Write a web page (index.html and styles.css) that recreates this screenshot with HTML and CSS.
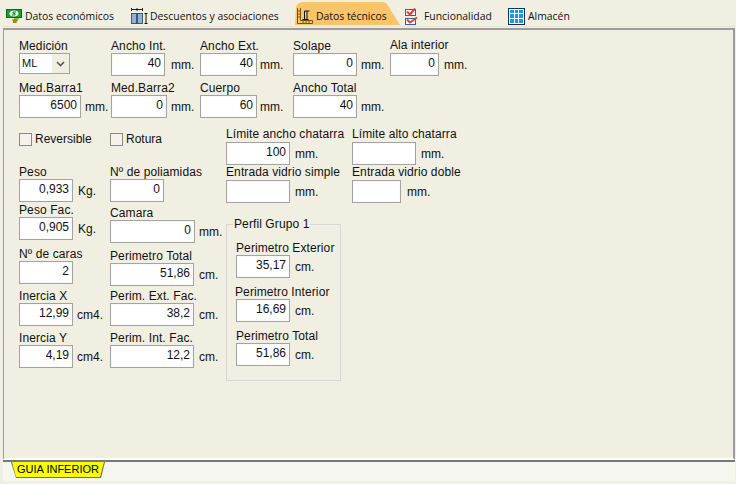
FILE: index.html
```html
<!DOCTYPE html>
<html lang="es">
<head>
<meta charset="utf-8">
<title>Datos técnicos</title>
<link rel="stylesheet" href="styles.css">
</head>
<body>
<div class="window">
  <nav class="tabs">
    <div class="tab tab-1">
      <svg class="ico" width="16" height="14" viewBox="0 0 16 14"><rect x=".5" y=".5" width="15" height="8" fill="#12a32e" stroke="#0a6a1e"/><ellipse cx="8" cy="4.500" rx="4.500" ry="3" fill="#eef7e4"/><path d="M10 3H7v1.500h2V6H6" stroke="#14802c" fill="none"/><path d="M8 9h5v1.500h-1V12h-1v2H7v-2H6v-1.500h2z" fill="#b4ac2c"/><path d="M7 11h4M7 13h3" stroke="#77701a"/></svg>
      <span>Datos económicos</span>
    </div>
    <div class="tab tab-2">
      <svg class="ico" width="18" height="16" viewBox="0 0 18 16"><path d="M1 1.500h12M1.500 0v3M7 0v3M12.500 0v3" stroke="#222" fill="none"/><rect x="1.500" y="5.500" width="11" height="10" fill="#8fb4dc" stroke="#4c5562"/><path d="M7 5.500v10" stroke="#2e3a4a" stroke-width="1.500"/><path d="M16 5v11M14.500 5.500h3M14.500 15.500h3" stroke="#111" fill="none"/></svg>
      <span>Descuentos y asociaciones</span>
    </div>
    <div class="tab tab-3">
      <svg class="ico" width="16" height="16" viewBox="0 0 16 16"><path d="M.500 0v15.500h15M3.500 0v12.500h12v3M.5 3H3M.5 6H3M.5 9H3M6 15v-2.500M9 15v-2.500M12 15v-2.500" stroke="#6b5a18" fill="none"/><path d="M5.500 11.500h6M7.500 11V3h5M10 11V3" stroke="#111" fill="none"/></svg>
      <span>Datos técnicos</span>
    </div>
    <div class="tab tab-4">
      <svg class="ico" width="16" height="17" viewBox="0 0 16 17"><rect x="1.500" y="1.500" width="10" height="6" fill="#fff" stroke="#2a5fc0"/><rect x="1.500" y="10.500" width="10" height="6" fill="#fff" stroke="#2a5fc0"/><path d="M3 3.500l3 3 5-6M3 11.500l3 3 7-5" stroke="#e2402a" stroke-width="2" fill="none"/></svg>
      <span>Funcionalidad</span>
    </div>
    <div class="tab tab-5">
      <svg class="ico" width="17" height="17" viewBox="0 0 17 17"><rect x=".5" y=".5" width="16" height="16" fill="#fff" stroke="#16324f"/><path d="M2 2h4v3H2zM7 2h3v3H7zM11 2h4v3h-4zM2 6h4v4H2zM7 6h3v4H7zM11 6h4v4h-4zM2 11h4v4H2zM7 11h3v4H7zM11 11h4v4h-4z" fill="#0f9bea"/></svg>
      <span>Almacén</span>
    </div>
  </nav>

  <main class="panel">
    <section class="top-grid">
      <div class="field"><label class="lbl">Medición</label>
        <div class="select"><span class="sel-val">ML</span><span class="sel-btn"><svg width="9" height="6" viewBox="0 0 9 6"><path d="M1 1l3.500 3.500L8 1" fill="none" stroke="#555" stroke-width="1.600"/></svg></span></div>
      </div>
      <div class="field"><label class="lbl">Ancho Int.</label><div class="line"><div class="inp w54">40</div><span class="unit u6">mm.</span></div></div>
      <div class="field"><label class="lbl">Ancho Ext.</label><div class="line"><div class="inp w57">40</div><span class="unit u3">mm.</span></div></div>
      <div class="field"><label class="lbl">Solape</label><div class="line"><div class="inp w64">0</div><span class="unit">mm.</span></div></div>
      <div class="field"><label class="lbl up1">Ala interior</label><div class="line"><div class="inp w49">0</div><span class="unit u5">mm.</span></div></div>

      <div class="field"><label class="lbl">Med.Barra1</label><div class="line"><div class="inp w62">6500</div><span class="unit">mm.</span></div></div>
      <div class="field"><label class="lbl">Med.Barra2</label><div class="line"><div class="inp w56">0</div><span class="unit">mm.</span></div></div>
      <div class="field"><label class="lbl">Cuerpo</label><div class="line"><div class="inp w57">60</div><span class="unit u3">mm.</span></div></div>
      <div class="field"><label class="lbl">Ancho Total</label><div class="line"><div class="inp w64">40</div><span class="unit">mm.</span></div></div>
    </section>

    <section class="lower">
      <div class="col col-a">
        <label class="check"><span class="box"></span>Reversible</label>
        <div class="field f-first"><label class="lbl">Peso</label><div class="line"><div class="inp w54">0,933</div><span class="unit u5">Kg.</span></div></div>
        <div class="field a-2"><label class="lbl">Peso Fac.</label><div class="line"><div class="inp w54">0,905</div><span class="unit u5">Kg.</span></div></div>
        <div class="field a-3"><label class="lbl">Nº de caras</label><div class="line"><div class="inp w54">2</div></div></div>
        <div class="field a-4"><label class="lbl">Inercia X</label><div class="line"><div class="inp w54">12,99</div><span class="unit">cm4.</span></div></div>
        <div class="field a-4"><label class="lbl">Inercia Y</label><div class="line"><div class="inp w54">4,19</div><span class="unit">cm4.</span></div></div>
      </div>
      <div class="col col-b">
        <label class="check"><span class="box"></span>Rotura</label>
        <div class="field f-first"><label class="lbl">Nº de poliamidas</label><div class="line"><div class="inp w54">0</div></div></div>
        <div class="field b-2"><label class="lbl">Camara</label><div class="line"><div class="inp w85">0</div><span class="unit">mm.</span></div></div>
        <div class="field b-3"><label class="lbl">Perimetro Total</label><div class="line"><div class="inp w84">51,86</div><span class="unit u5">cm.</span></div></div>
        <div class="field b-4"><label class="lbl">Perim. Ext. Fac.</label><div class="line"><div class="inp w84">38,2</div><span class="unit u5">cm.</span></div></div>
        <div class="field b-5"><label class="lbl">Perim. Int. Fac.</label><div class="line"><div class="inp w84">12,2</div><span class="unit u5">cm.</span></div></div>
      </div>
      <div class="col col-c">
        <div class="limits">
          <div class="field"><label class="lbl">Límite ancho chatarra</label><div class="line"><div class="inp w64">100</div><span class="unit u5">mm.</span></div></div>
          <div class="field"><label class="lbl">Límite alto chatarra</label><div class="line"><div class="inp w64"></div><span class="unit u5">mm.</span></div></div>
          <div class="field"><label class="lbl">Entrada vidrio simple</label><div class="line"><div class="inp w64"></div><span class="unit u5">mm.</span></div></div>
          <div class="field"><label class="lbl">Entrada vidrio doble</label><div class="line"><div class="inp w49"></div><span class="unit u6">mm.</span></div></div>
        </div>
        <fieldset class="group">
          <legend>Perfil Grupo 1</legend>
          <div class="field"><label class="lbl">Perimetro Exterior</label><div class="line"><div class="inp w54">35,17</div><span class="unit u5">cm.</span></div></div>
          <div class="field"><label class="lbl left1">Perimetro Interior</label><div class="line"><div class="inp w54">16,69</div><span class="unit u5">cm.</span></div></div>
          <div class="field"><label class="lbl">Perimetro Total</label><div class="line"><div class="inp w54">51,86</div><span class="unit u5">cm.</span></div></div>
        </fieldset>
      </div>
    </section>
  </main>

  <footer class="bottom">
    <div class="guide"><span>GUIA INFERIOR</span></div>
  </footer>
</div>
</body>
</html>
```

FILE: styles.css
```css
html, body { margin: 0; padding: 0; }
body { width: 736px; height: 484px; overflow: hidden; background: #f1efe2; font-family: "Liberation Sans", Arial, sans-serif; font-size: 12px; color: #111; }
.window { width: 736px; height: 484px; display: flex; flex-direction: column; box-sizing: border-box; padding: 0 1px 3px 0; }

.tabs { height: 27px; display: flex; align-items: flex-end; padding-bottom: 1px; box-sizing: border-box; border-bottom: 1px solid #e7e4c9; margin: 0 0 0 3px; }
.tab { display: flex; align-items: center; gap: 3px; height: 23px; padding-top: 5px; box-sizing: border-box; font-family: "Open Sans", sans-serif; font-size: 10.400px; color: #111; white-space: nowrap; }
.tab-1 { width: 120px; padding-left: 3px; }
.tab-2 { width: 172px; padding-left: 7px; gap: 2px; }
.tab-3 { width: 106px; padding-left: 2px; background: #fac36c; clip-path: polygon(0 100%, 1px 4px, 4px 1px, 7px 0, 89px 0, 92px 2px, 105px 100%); }
.tab-4 { width: 106px; padding-left: 3px; gap: 4px; }
.tab-5 { padding-left: 1px; }

.panel { flex: 1; margin: 1px 0 0 3px; box-sizing: border-box; border-top: 2px solid #9c9c9c; border-left: 1px solid #9c9c9c; border-right: 2px solid #9c9c9c; border-bottom: 2px solid #fff; padding: 9px 0 0 15px; }

.top-grid { display: grid; grid-template-columns: 92px 89px 93px 97px auto; grid-auto-rows: 42px; justify-content: start; }
.field { display: flex; flex-direction: column; }
.lbl { display: block; height: 14px; line-height: 14px; white-space: nowrap; letter-spacing: .1px; }
.up1 { transform: translateY(-1px); }
.left1 { margin-left: -1px; }
.line { display: flex; align-items: center; gap: 4px; }
.inp { height: 23px; box-sizing: border-box; border: 1px solid #a3a3a3; background: #fff; text-align: right; line-height: 19px; padding-right: 3px; font-size: 12px; box-shadow: inset 0 0 0 1px #fafafa; }
.unit { white-space: nowrap; padding-top: 1px; }
.u3 { margin-left: -1px; }
.u5 { margin-left: 1px; }
.u6 { margin-left: 2px; }
.w49 { width: 49px; } .w54 { width: 54px; } .w56 { width: 56px; } .w57 { width: 57px; } .w62 { width: 62px; } .w64 { width: 64px; } .w84 { width: 84px; } .w85 { width: 85px; }

.select { width: 51px; height: 21px; box-sizing: border-box; border: 1px solid #a3a3a3; background: #fff; display: flex; }
.sel-val { flex: 1; font-size: 11px; line-height: 19px; padding-left: 2px; }
.sel-btn { width: 17px; background: #f1efe2; display: flex; align-items: center; justify-content: center; }

.lower { display: flex; margin-top: 8px; }
.col-a { width: 91px; padding-top: 1px; }
.col-b { width: 116px; padding-top: 1px; }
.col-c { margin-top: -4px; }
.check { display: flex; align-items: center; gap: 3px; height: 14px; }
.box { width: 13px; height: 13px; box-sizing: border-box; border: 1px solid #8a8a8a; background: #f5f3e9; }
.f-first { margin-top: 19px; }
.a-2 { margin-top: 1px; }
.a-3 { margin-top: 7px; }
.a-4 { margin-top: 5px; }
.b-2 { margin-top: 4px; }
.b-3 { margin-top: 6px; }
.b-4 { margin-top: 3px; }
.b-5 { margin-top: 5px; }

.limits { display: grid; grid-template-columns: 126px auto; grid-auto-rows: 38px; }
.limits .lbl { height: 15px; }
.group { margin: 14px 0 0 0; padding: 10px 0 0 9px; width: 115px; height: 164px; box-sizing: border-box; border: 1px solid #d8d8d2; }
.group legend { padding: 0 1px; margin-left: -3px; line-height: 14px; font-size: 12px; letter-spacing: .1px; }
.group .field + .field { margin-top: 7px; }

.bottom { height: 21px; margin: 0 0 0 3px; box-sizing: border-box; border-top: 2px solid #777; background-color: #f6f6f1; background-image: radial-gradient(#fff 25%, transparent 26%); background-size: 2px 2px; padding-left: 8px; }
.guide { width: 94px; height: 16px; background: #6a6a6a; clip-path: polygon(0 0, 100% 0, 90px 100%, 5px 100%); }
.guide span { display: block; width: 92px; height: 15px; margin-left: 1px; background: #ffff00; clip-path: polygon(0 0, 100% 0, 88px 100%, 4px 100%); font-size: 11px; line-height: 15px; text-align: center; color: #000; }
```
